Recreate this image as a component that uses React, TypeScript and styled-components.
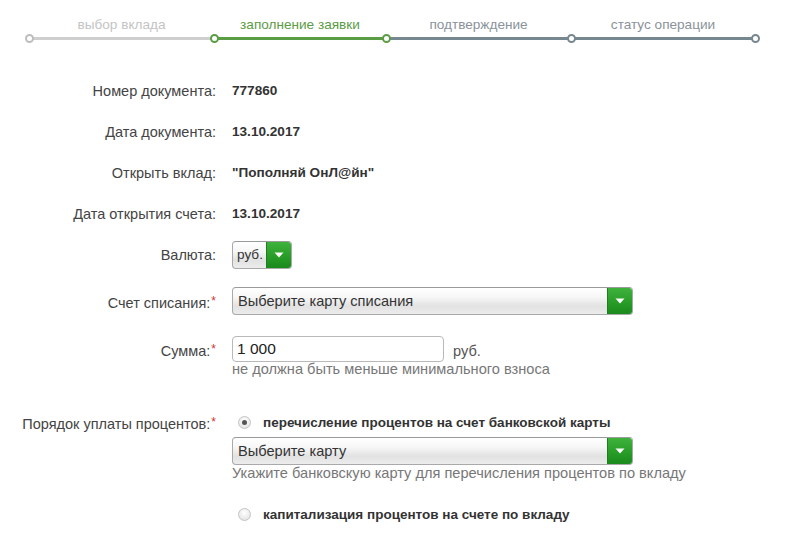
import React from "react";
import styled, { createGlobalStyle, css } from "styled-components";

const GlobalStyle = createGlobalStyle`
  html, body {
    margin: 0;
    padding: 0;
    background: #ffffff;
  }
  body {
    font-family: "Liberation Sans", Arial, sans-serif;
    color: #333;
  }
`;

type StepState = "done" | "active" | "todo";

const stepColors: Record<StepState, { line: string; dot: string; text: string }> = {
  done: { line: "#cfcfcf", dot: "#bdbdbd", text: "#c4c4c4" },
  active: { line: "#5b9d44", dot: "#5b9d44", text: "#5c9b46" },
  todo: { line: "#778790", dot: "#778790", text: "#8a939a" },
};

const Page = styled.div`
  width: 800px;
  height: 534px;
  overflow: hidden;
`;

const Stepper = styled.div`
  display: flex;
  padding: 16px 0 0 29px;
  height: 56px;
  box-sizing: border-box;
`;

const dot = css`
  content: "";
  position: absolute;
  top: 18px;
  width: 5px;
  height: 5px;
  border-radius: 50%;
  background: #fff;
  z-index: 1;
`;

const Segment = styled.div<{ $w: number; $state: StepState; $first?: boolean; $endDot: string }>`
  position: relative;
  width: ${({ $w }) => $w}px;
  display: flex;
  flex-direction: column;

  &::after {
    ${dot};
    right: -4.5px;
    border: 2px solid ${({ $endDot }) => $endDot};
  }

  ${({ $first, $state }) =>
    $first &&
    css`
      &::before {
        ${dot};
        left: -4.5px;
        border: 2px solid ${stepColors[$state].dot};
      }
    `}
`;

const StepLabel = styled.div<{ $state: StepState }>`
  font-size: 13.6px;
  line-height: 18px;
  text-align: center;
  color: ${({ $state }) => stepColors[$state].text};
`;

const StepLine = styled.div<{ $state: StepState }>`
  margin-top: 3px;
  height: 3px;
  background: ${({ $state }) => stepColors[$state].line};
`;

const Form = styled.div`
  display: flex;
  flex-direction: column;
  padding-top: 14px;
`;

const Row = styled.div<{ $h?: number; $mt?: number }>`
  display: grid;
  grid-template-columns: 216px 1fr;
  column-gap: 16px;
  align-items: start;
  margin-top: ${({ $mt }) => $mt ?? 0}px;
  ${({ $h }) =>
    $h &&
    css`
      height: ${$h}px;
      align-items: center;
    `}
`;

const Label = styled.div<{ $lh?: number }>`
  text-align: right;
  font-size: 14.5px;
  color: #444;
  line-height: ${({ $lh }) => $lh ?? 20}px;
  white-space: nowrap;
`;

const Star = styled.span`
  color: #d0342c;
  font-size: 12px;
  vertical-align: 3px;
  margin-left: 1px;
`;

const Value = styled.div`
  font-size: 13.6px;
  font-weight: bold;
  color: #333;
`;

const Field = styled.div`
  display: flex;
  flex-direction: column;
  align-items: flex-start;
`;

const SelectBox = styled.div<{ $w: number; $mt?: number }>`
  width: ${({ $w }) => $w}px;
  height: 28px;
  margin-top: ${({ $mt }) => $mt ?? 0}px;
  box-sizing: border-box;
  display: flex;
  border: 1px solid #a9a9a9;
  border-top-color: #9a9a9a;
  border-radius: 4px;
  overflow: hidden;
  background: linear-gradient(#ffffff 0%, #f7f7f7 35%, #e2e2e2 70%, #ececec 100%);
  box-shadow: inset 0 1px 0 #fff;
`;

const SelectText = styled.div<{ $small?: boolean }>`
  flex: 1;
  padding-left: ${({ $small }) => ($small ? 4 : 5)}px;
  font-size: ${({ $small }) => ($small ? 13.6 : 14.6)}px;
  line-height: 26px;
  color: #333;
  white-space: nowrap;
  overflow: hidden;
`;

const SelectButton = styled.div`
  width: 24px;
  flex: none;
  display: flex;
  align-items: center;
  justify-content: center;
  background: linear-gradient(#3fb23c 0%, #2a9f29 50%, #1a8a1c 100%);
  border-left: 1px solid #1d7f1e;
`;

const Arrow = () => (
  <svg width="10" height="6" viewBox="0 0 10 6">
    <path d="M0.5 0.5 L9.5 0.5 L5 5.5 Z" fill="#ffffff" />
  </svg>
);

const Select = ({ text, width, small, mt }: { text: string; width: number; small?: boolean; mt?: number }) => (
  <SelectBox $w={width} $mt={mt}>
    <SelectText $small={small}>{text}</SelectText>
    <SelectButton>
      <Arrow />
    </SelectButton>
  </SelectBox>
);

const InputLine = styled.div`
  display: flex;
  align-items: center;
  gap: 9px;
`;

const TextInput = styled.div`
  width: 212px;
  height: 26px;
  box-sizing: border-box;
  border: 1px solid #b9b9b9;
  border-radius: 4px;
  padding-left: 4px;
  font-size: 15.5px;
  line-height: 24px;
  color: #222;
  background: #fff;
`;

const Unit = styled.span`
  font-size: 14.6px;
  color: #555;
  padding-top: 4px;
`;

const Hint = styled.div<{ $mt?: number }>`
  font-size: 14.6px;
  line-height: 16px;
  color: #777;
  margin-top: ${({ $mt }) => $mt ?? 0}px;
  white-space: nowrap;
`;

const RadioLine = styled.div<{ $mt?: number }>`
  display: flex;
  align-items: center;
  height: 20px;
  padding-left: 6px;
  margin-top: ${({ $mt }) => $mt ?? 0}px;
`;

const RadioCircle = styled.span<{ $checked?: boolean }>`
  width: 13px;
  height: 13px;
  box-sizing: border-box;
  border-radius: 50%;
  border: 1px solid #c4c4c4;
  background: radial-gradient(circle at 50% 35%, #ffffff 0%, #e8e8e8 70%, #d6d6d6 100%);
  display: flex;
  align-items: center;
  justify-content: center;
  margin-right: 12px;

  &::after {
    content: "";
    width: 5px;
    height: 5px;
    border-radius: 50%;
    background: ${({ $checked }) => ($checked ? "#555" : "transparent")};
  }
`;

const RadioText = styled.span`
  font-size: 13.5px;
  font-weight: bold;
  color: #333;
  white-space: nowrap;
`;

const steps: { title: string; w: number; state: StepState }[] = [
  { title: "выбор вклада", w: 185, state: "done" },
  { title: "заполнение заявки", w: 172, state: "active" },
  { title: "подтверждение", w: 185, state: "todo" },
  { title: "статус операции", w: 184, state: "todo" },
];

const info = [
  ["Номер документа:", "777860"],
  ["Дата документа:", "13.10.2017"],
  ["Открыть вклад:", "\"Пополняй ОнЛ@йн\""],
  ["Дата открытия счета:", "13.10.2017"],
];

export default function App() {
  return (
    <Page>
      <GlobalStyle />
      <Stepper>
        {steps.map((s, i) => {
          const next = steps[i + 1];
          const endDot =
            s.state === "active" ? stepColors.active.dot : next ? stepColors[next.state].dot : stepColors[s.state].dot;
          return (
            <Segment key={s.title} $w={s.w} $state={s.state} $first={i === 0} $endDot={endDot}>
              <StepLabel $state={s.state}>{s.title}</StepLabel>
              <StepLine $state={s.state} />
            </Segment>
          );
        })}
      </Stepper>

      <Form>
        {info.map(([label, value]) => (
          <Row key={label} $h={41}>
            <Label>{label}</Label>
            <Value>{value}</Value>
          </Row>
        ))}

        <Row $h={41}>
          <Label>Валюта:</Label>
          <Select text="руб." width={60} small />
        </Row>

        <Row $mt={12}>
          <Label $lh={28}>
            Счет списания:<Star>*</Star>
          </Label>
          <Select text="Выберите карту списания" width={401} />
        </Row>

        <Row $mt={19}>
          <Label $lh={26}>
            Сумма:<Star>*</Star>
          </Label>
          <Field>
            <InputLine>
              <TextInput>1 000</TextInput>
              <Unit>руб.</Unit>
            </InputLine>
            <Hint $mt={-1}>не должна быть меньше минимального взноса</Hint>
          </Field>
        </Row>

        <Row $mt={35}>
          <Label $lh={20}>
            Порядок уплаты процентов:<Star>*</Star>
          </Label>
          <Field>
            <RadioLine>
              <RadioCircle $checked />
              <RadioText>перечисление процентов на счет банковской карты</RadioText>
            </RadioLine>
            <Select text="Выберите карту" width={401} mt={5} />
            <Hint>Укажите банковскую карту для перечисления процентов по вкладу</Hint>
            <RadioLine $mt={23}>
              <RadioCircle />
              <RadioText>капитализация процентов на счете по вкладу</RadioText>
            </RadioLine>
          </Field>
        </Row>
      </Form>
    </Page>
  );
}
